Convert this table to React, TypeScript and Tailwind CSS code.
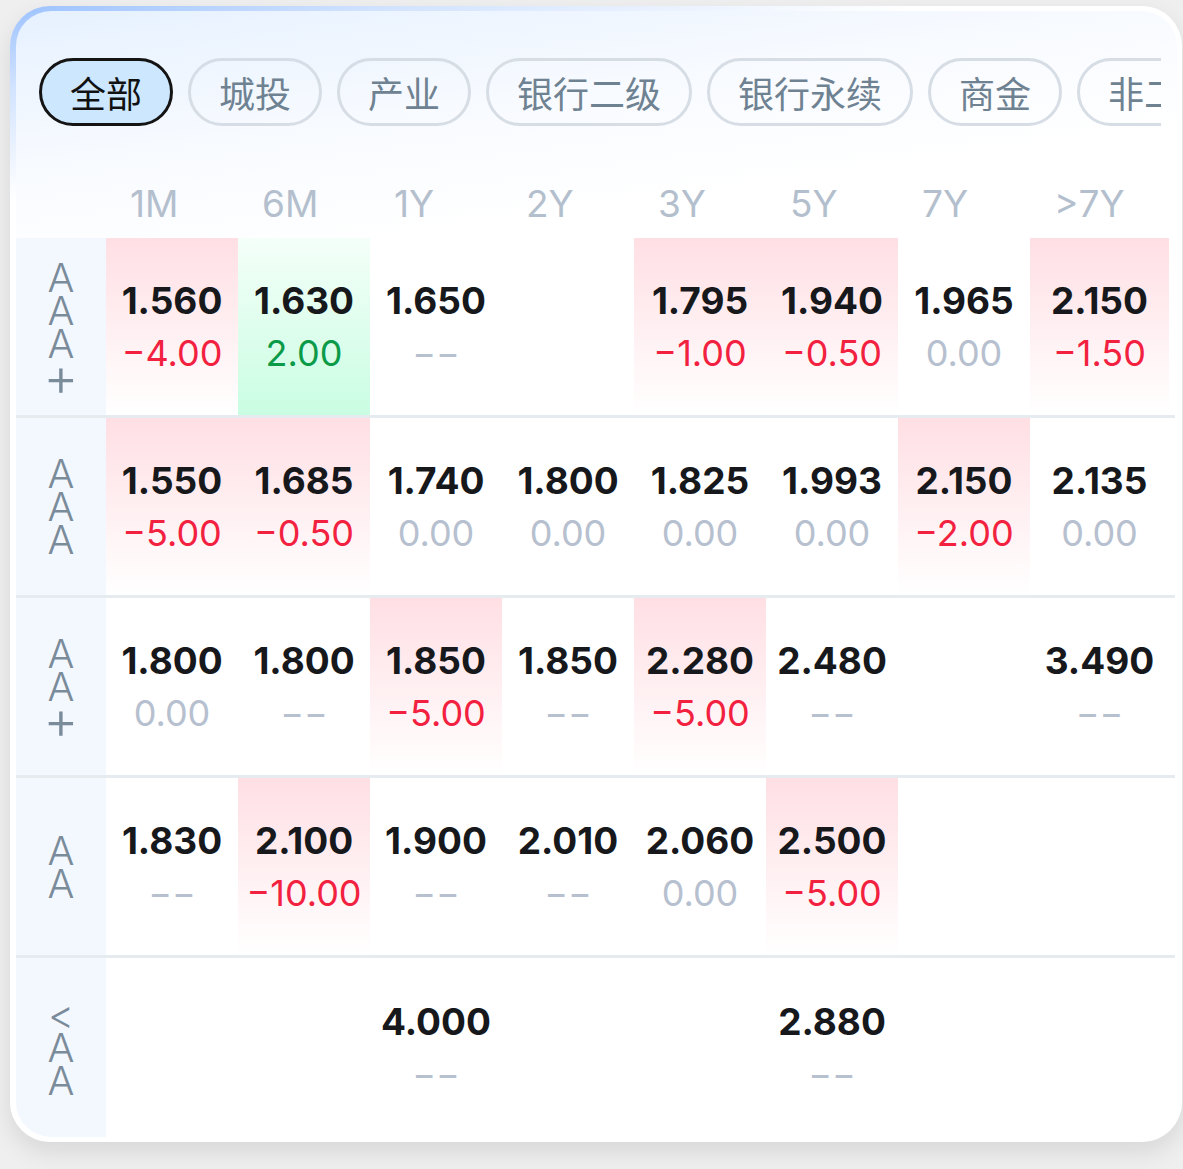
import React from 'react';

const TABS = ['全部', '城投', '产业', '银行二级', '银行永续', '商金', '非二永续'];
const TERMS = ['1M', '6M', '1Y', '2Y', '3Y', '5Y', '7Y', '>7Y'];

type Cell = { v: string; d: string; hl?: 'red' | 'green' } | null;

const ROWS: { label: string[]; cells: Cell[] }[] = [
  {
    label: ['A', 'A', 'A', '+'],
    cells: [
      { v: '1.560', d: '−4.00', hl: 'red' },
      { v: '1.630', d: '2.00', hl: 'green' },
      { v: '1.650', d: '--' },
      null,
      { v: '1.795', d: '−1.00', hl: 'red' },
      { v: '1.940', d: '−0.50', hl: 'red' },
      { v: '1.965', d: '0.00' },
      { v: '2.150', d: '−1.50', hl: 'red' },
    ],
  },
  {
    label: ['A', 'A', 'A'],
    cells: [
      { v: '1.550', d: '−5.00', hl: 'red' },
      { v: '1.685', d: '−0.50', hl: 'red' },
      { v: '1.740', d: '0.00' },
      { v: '1.800', d: '0.00' },
      { v: '1.825', d: '0.00' },
      { v: '1.993', d: '0.00' },
      { v: '2.150', d: '−2.00', hl: 'red' },
      { v: '2.135', d: '0.00' },
    ],
  },
  {
    label: ['A', 'A', '+'],
    cells: [
      { v: '1.800', d: '0.00' },
      { v: '1.800', d: '--' },
      { v: '1.850', d: '−5.00', hl: 'red' },
      { v: '1.850', d: '--' },
      { v: '2.280', d: '−5.00', hl: 'red' },
      { v: '2.480', d: '--' },
      null,
      { v: '3.490', d: '--' },
    ],
  },
  {
    label: ['A', 'A'],
    cells: [
      { v: '1.830', d: '--' },
      { v: '2.100', d: '−10.00', hl: 'red' },
      { v: '1.900', d: '--' },
      { v: '2.010', d: '--' },
      { v: '2.060', d: '0.00' },
      { v: '2.500', d: '−5.00', hl: 'red' },
      null,
      null,
    ],
  },
  {
    label: ['<', 'A', 'A'],
    cells: [null, null, { v: '4.000', d: '--' }, null, null, { v: '2.880', d: '--' }, null, null],
  },
];

function deltaColor(d: string) {
  if (d.startsWith('−')) return 'text-[#f2213f]';
  if (d === '--' || d === '0.00') return 'text-[#b6c0cf]';
  return 'text-[#0b9a48]';
}

function DataCell({ cell }: { cell: Cell }) {
  const bg =
    cell?.hl === 'red'
      ? 'bg-linear-to-b from-[#ffdfe4] to-white'
      : cell?.hl === 'green'
        ? 'bg-linear-to-b from-[#f4fff9] to-[#c9fde2]'
        : '';
  return (
    <div className={`flex flex-col items-center justify-center ${bg}`}>
      {cell && (
        <>
          <span className="text-[37px] font-bold leading-[52px] text-[#16181c]">{cell.v}</span>
          {cell.d === '--' ? (
            <span className="text-[36px] leading-[52px] text-[#b6c0cf]">−−</span>
          ) : (
            <span className={`text-[36px] leading-[52px] ${deltaColor(cell.d)}`}>{cell.d}</span>
          )}
        </>
      )}
    </div>
  );
}

export default function App() {
  return (
    <div
      className="min-h-[1169px] bg-[#efefef] pl-[10px] pr-[1px] pt-[6px]"
      style={{ fontFamily: 'Inter, "Noto Sans CJK SC", sans-serif' }}
    >
      <div className="rounded-[40px] bg-[linear-gradient(168deg,#9cc2ff_0%,#d2e3ff_6%,#ffffff_14%)] p-[5px] pl-[6px] shadow-[0_10px_24px_rgba(0,0,0,0.10)]">
        <div className="overflow-hidden rounded-[35px] bg-[linear-gradient(172deg,#e6f1ff_0%,#f7faff_12%,#ffffff_22%)]">
          {/* tabs */}
          <div className="ml-[23px] mr-[16px] mt-[47px] flex gap-[15px] overflow-hidden">
            {TABS.map((t, i) => (
              <div
                key={t}
                className={`flex h-[68px] shrink-0 items-center rounded-full border-[3px] px-[28px] text-[36px] ${
                  i === 0
                    ? 'border-[#141414] bg-[#cde7ff] text-[#111]'
                    : 'border-[#d6dde5] text-[#6f8292]'
                }`}
                style={{ fontFamily: '"Noto Sans CJK SC", sans-serif' }}
              >
                {t}
              </div>
            ))}
          </div>

          {/* header */}
          <div className="mt-[44px] grid h-[68px] grid-cols-[90px_repeat(7,132px)_139px] items-center">
            <div />
            {TERMS.map((t) => (
              <div key={t} className="pl-[24px] text-[37px] text-[#b4bfce]">
                {t}
              </div>
            ))}
          </div>

          {/* rows */}
          {ROWS.map((row, ri) => (
            <div
              key={ri}
              className={`mr-[2px] grid grid-cols-[90px_repeat(7,132px)_139px] ${
                ri < ROWS.length - 1 ? 'h-[180px] border-b-[3px] border-[#e6ebf0]' : 'h-[179px]'
              }`}
            >
              <div className="flex flex-col items-center justify-center bg-[#f3f8ff]">
                {row.label.map((c, ci) => (
                  <span
                    key={ci}
                    className={`font-light leading-[33px] text-[#7a8b9a] ${
                      c === '+' ? 'text-[54px]' : 'text-[40px]'
                    }`}
                  >
                    {c}
                  </span>
                ))}
              </div>
              {row.cells.map((cell, ci) => (
                <DataCell key={ci} cell={cell} />
              ))}
            </div>
          ))}
        </div>
      </div>
    </div>
  );
}
